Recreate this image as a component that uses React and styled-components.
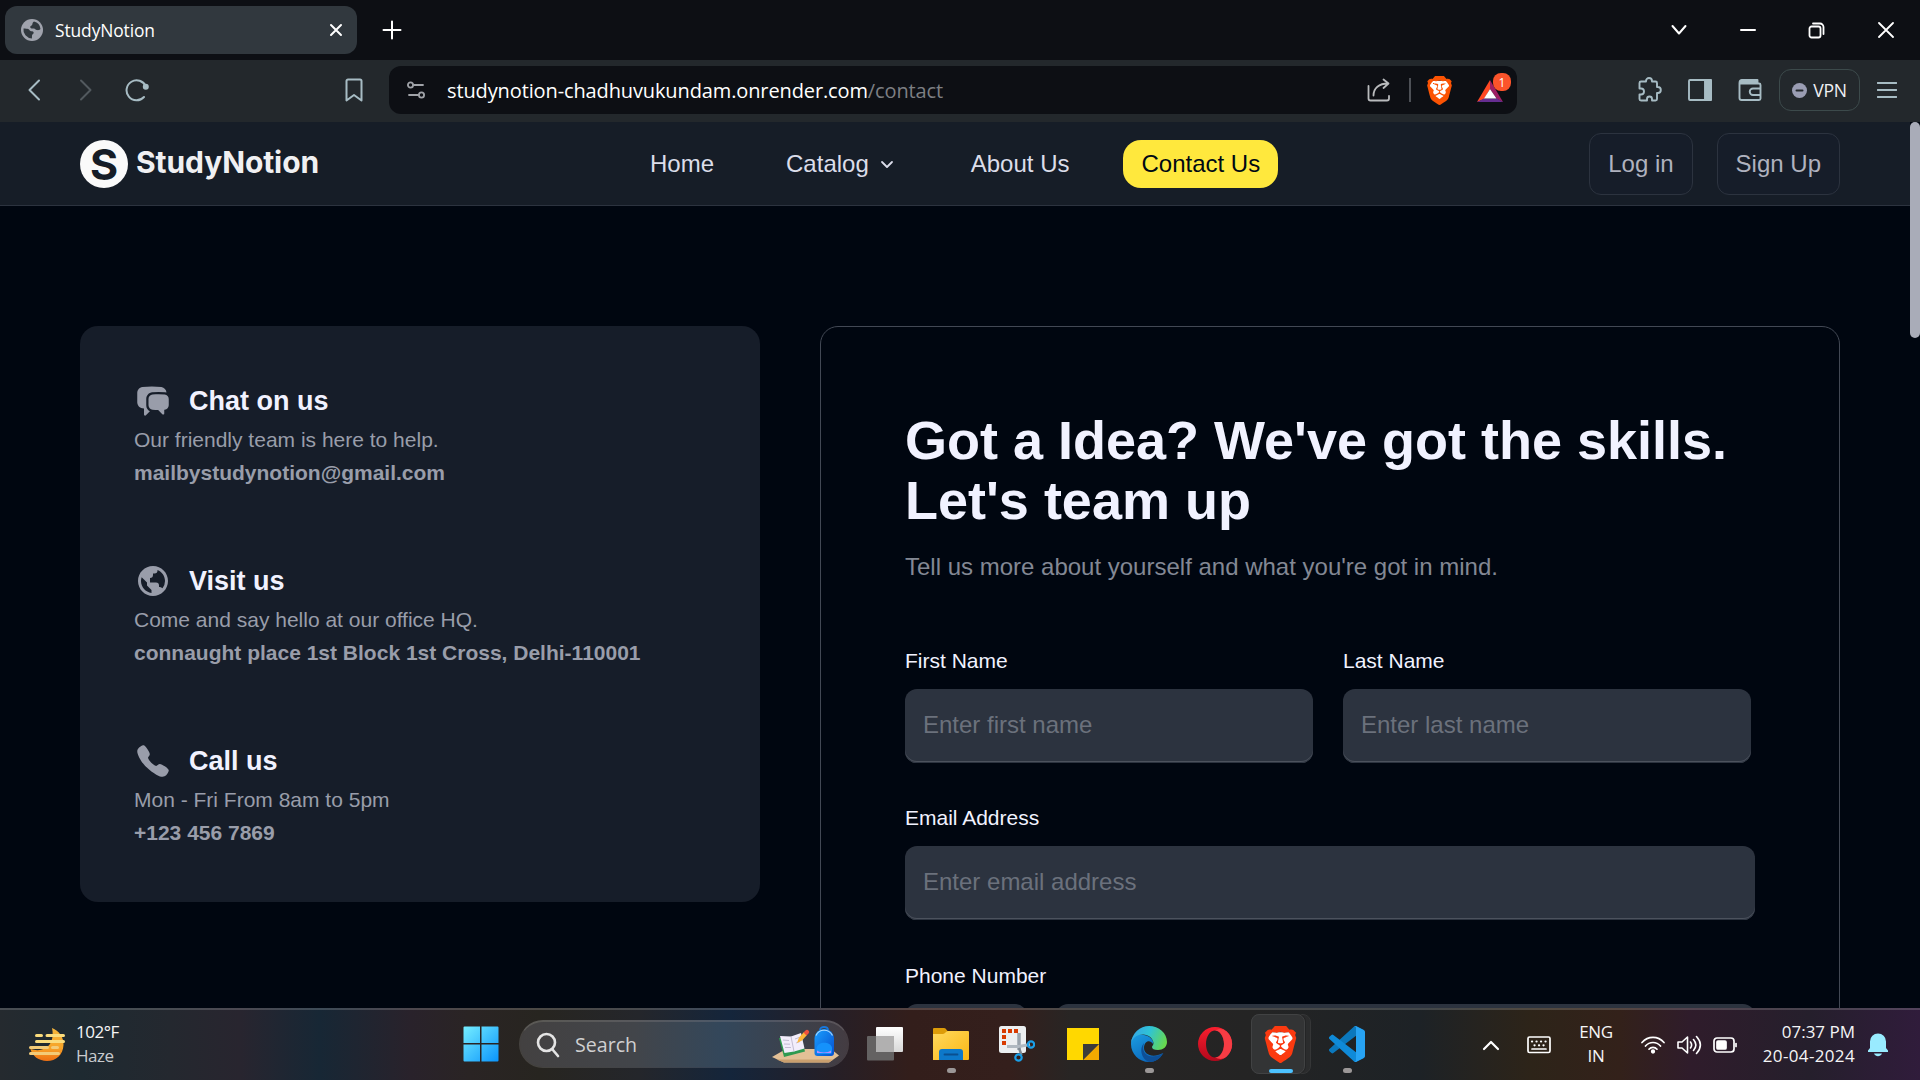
import React from "react";
import styled, { createGlobalStyle } from "styled-components";
import { HiChatBubbleLeftRight } from "react-icons/hi2";
import { BiWorld } from "react-icons/bi";
import { IoCall } from "react-icons/io5";
import { SiBrave } from "react-icons/si";

const Global = createGlobalStyle`
  * { box-sizing: border-box; }
  html, body { margin: 0; padding: 0; background: #000814; overflow: hidden; }
  svg { display: block; flex: none; }
`;

const SYSTEM = '"Open Sans", "Noto Sans", sans-serif';
const SANS = '"Liberation Sans", Arial, sans-serif';

const Screen = styled.div`
  width: 1920px;
  height: 1080px;
  display: flex;
  flex-direction: column;
  overflow: hidden;
  background: #000610;
  font-family: ${SANS};
`;

/* ---------- browser chrome ---------- */

const TabStrip = styled.div`
  height: 60px;
  flex: none;
  display: flex;
  align-items: center;
  background: #0d0f14;
  padding-left: 5px;
`;

const Tab = styled.div`
  width: 352px;
  height: 48px;
  border-radius: 12px;
  background: #31383e;
  display: flex;
  align-items: center;
  padding: 0 14px 0 16px;
  gap: 12px;
`;

const TabTitle = styled.span`
  flex: 1;
  font: 400 17.4px/24px ${SYSTEM};
  letter-spacing: -0.1px;
  color: #fff;
`;

const NewTab = styled.div`
  margin-left: 25px;
  flex: 1;
`;

const WindowControls = styled.div`
  display: flex;
  align-items: center;
  height: 60px;
`;

const ControlSlot = styled.div`
  width: 69px;
  display: flex;
  justify-content: center;
`;

const Toolbar = styled.div`
  height: 62px;
  flex: none;
  display: flex;
  align-items: center;
  background: #23282c;
  padding-bottom: 2px;
`;

const Slot = styled.div`
  width: ${(p) => p.$w}px;
  flex: none;
  display: flex;
  justify-content: center;
  align-items: center;
`;

const Spacer = styled.div`
  flex: 1;
`;

const AddressBar = styled.div`
  width: 1128px;
  height: 48px;
  flex: none;
  margin-left: 17px;
  border-radius: 12px;
  background: #0d0f14;
  display: flex;
  align-items: center;
  padding-left: 18px;
`;

const Url = styled.div`
  flex: 1;
  margin-left: 22px;
  padding-top: 1px;
  font: 400 20px/28px ${SYSTEM};
  letter-spacing: -0.12px;
  color: #fff;
  white-space: nowrap;
`;

const UrlPath = styled.span`
  color: #7d7f83;
`;

const Divider = styled.div`
  width: 2px;
  height: 24px;
  background: #4d5056;
`;

const VpnButton = styled.div`
  width: 81px;
  height: 42px;
  flex: none;
  border: 1.5px solid #3c4a4b;
  border-radius: 12px;
  display: flex;
  align-items: center;
  justify-content: center;
  gap: 6px;
  color: #f0f1f4;
  font: 400 17.6px/24px ${SYSTEM};
  letter-spacing: -0.3px;
`;

/* ---------- page ---------- */

const Viewport = styled.div`
  height: 886px;
  flex: none;
  display: flex;
  overflow: hidden;
`;

const Page = styled.div`
  width: 1910px;
  flex: none;
`;

const ScrollTrack = styled.div`
  width: 10px;
  background: #000610;
`;

const ScrollThumb = styled.div`
  height: 216px;
  border-radius: 5px;
  background: #a9acb8;
`;

const NavBar = styled.header`
  height: 84px;
  background: #161d27;
  border-bottom: 1px solid #2c333f;
  display: flex;
  align-items: center;
  padding: 0 70px 0 80px;
`;

const Logo = styled.div`
  display: flex;
  align-items: center;
  width: 552px;
  gap: 8px;
`;

const LogoMark = styled.div`
  width: 48px;
  height: 48px;
  border-radius: 50%;
  background: #fafafa;
  color: #161d27;
  font: 700 43px/49px Inter, sans-serif;
  text-align: center;
`;

const LogoWord = styled.div`
  padding-bottom: 3px;
  font: 700 30px/42px Inter, sans-serif;
  letter-spacing: -0.1px;
  color: #f0f0f2;
`;

const NavLinks = styled.nav`
  display: flex;
  gap: 36px;
  flex: 1;
`;

const NavLink = styled.a`
  height: 48px;
  padding: 0 18px;
  display: flex;
  align-items: center;
  gap: 6px;
  border-radius: 18px;
  font-size: 24px;
  color: ${(p) => (p.$active ? "#000814" : "#dbddea")};
  background: ${(p) => (p.$active ? "#ffe83d" : "transparent")};
  white-space: nowrap;
`;

const AuthButtons = styled.div`
  display: flex;
  gap: 24px;
`;

const AuthButton = styled.button`
  height: 62px;
  padding: 0 18px;
  border: 1px solid #2c333f;
  border-radius: 12px;
  background: #161d29;
  color: #afb2bf;
  font: 24px ${SANS};
`;

const Main = styled.main`
  display: flex;
  align-items: flex-start;
  gap: 60px;
  padding: 120px 70px 0 80px;
`;

const DetailsCard = styled.section`
  width: 680px;
  height: 576px;
  border-radius: 18px;
  background: #161d29;
  padding: 54px;
  display: flex;
  flex-direction: column;
  gap: 71px;
`;

const Detail = styled.div`
  font-size: 21px;
  line-height: 33px;
  color: #999daa;
`;

const DetailHead = styled.div`
  height: 42px;
  margin-bottom: 1px;
  padding-left: 1px;
  display: flex;
  align-items: center;
  gap: 18px;
`;

const DetailTitle = styled.h2`
  margin: 0;
  font-size: 27px;
  color: #f1f2ff;
`;

const DetailStrong = styled.div`
  font-weight: 700;
`;

const FormCard = styled.section`
  width: 1020px;
  height: 900px;
  border: 1px solid #424854;
  border-radius: 18px;
  padding: 83px 84px;
`;

const Heading = styled.h1`
  margin: 0;
  font-size: 54px;
  line-height: 60px;
  color: #f1f2ff;
  white-space: nowrap;
`;

const Lead = styled.p`
  margin: 19px 0 59px;
  font-size: 24px;
  line-height: 36px;
  color: #838894;
`;

const Fields = styled.form`
  display: flex;
  flex-direction: column;
  gap: 38.9px;
`;

const NameRow = styled.div`
  display: grid;
  grid-template-columns: 408px 408px;
  gap: 30px;
`;

const PhoneRow = styled.div`
  display: grid;
  grid-template-columns: 122px 1fr;
  gap: 29px;
`;

const Field = styled.label`
  display: flex;
  flex-direction: column;
  gap: 12px;
  font-size: 21px;
  line-height: 33px;
  color: #f1f2ff;
`;

const Input = styled.input`
  width: 100%;
  height: 73.5px;
  border: 0;
  border-radius: 12px;
  background: #2c333f;
  padding: 0 18px 2px;
  font: 24px ${SANS};
  color: #f1f2ff;
  box-shadow: inset 0 -1px 0 #2c333f, inset 0 -2px 0 #4c525d;
  &::placeholder {
    color: #6b717c;
    opacity: 1;
  }
`;

/* ---------- taskbar ---------- */

const Taskbar = styled.footer`
  height: 72px;
  flex: none;
  border-top: 2px solid rgba(255, 255, 255, 0.17);
  background: linear-gradient(
      90deg,
      #252a2f 0,
      #1e2a31 80px,
      #24282f 170px,
      #28252f 240px,
      #172735 320px,
      #29222b 410px,
      #2a2424 470px,
      #272520 540px,
      #24262b 640px,
      #14253b 730px,
      #251f27 830px,
      #331e1b 910px,
      #341f1c 1010px,
      #282524 1070px,
      #242424 1250px,
      #1d2226 1420px,
      #2d2419 1530px,
      #33211a 1620px,
      #2f1c2b 1690px,
      #251f2c 1810px,
      #301c3b 1920px
    )
    border-box;
  display: flex;
  align-items: center;
  color: #f5f5f6;
  font-family: ${SYSTEM};
`;

const Weather = styled.div`
  width: 448px;
  padding-left: 28px;
  display: flex;
  align-items: center;
  gap: 10px;
`;

const TwoLines = styled.div`
  display: flex;
  flex-direction: column;
  align-items: ${(p) => p.$align || "flex-start"};
  padding-bottom: 2px;
  font-size: 17px;
  line-height: 24px;
  letter-spacing: ${(p) => p.$track || "-0.3px"};
  white-space: nowrap;
`;

const DateText = styled.span`
  letter-spacing: 0.35px;
`;

const Muted = styled.span`
  color: #c9cbce;
`;

const SearchBox = styled.div`
  width: 330px;
  height: 48px;
  margin: 0 3px 2px 5px;
  border-radius: 25px;
  border: 1px solid rgba(255, 255, 255, 0.14);
  border-top: 2px solid rgba(255, 255, 255, 0.24);
  background: linear-gradient(90deg, #434141, #42454a 35%, #33475b 62%, #3e4049 88%, #443c42) padding-box;
  display: flex;
  align-items: center;
  padding: 0 8px 0 16px;
  gap: 15px;
`;

const SearchText = styled.span`
  flex: 1;
  font-size: 19.6px;
  color: #d0d0d1;
`;

const App66 = styled.div`
  width: 66px;
  height: 70px;
  flex: none;
  display: flex;
  flex-direction: column;
  align-items: center;
  padding-top: 16px;
`;

const Indicator = styled.div`
  width: ${(p) => (p.$active ? 24 : 9)}px;
  height: 5px;
  margin-top: 6px;
  border-radius: 3px;
  background: ${(p) => (p.$active ? "#4cc2ff" : "#9b9797")};
`;

const ActiveTile = styled.div`
  width: 60px;
  height: 60px;
  flex: none;
  margin: 0 3px 2px 3px;
  border-radius: 8px;
  background: #2b2c2d;
  border: 1px solid #353637;
`;

const ActiveFace = styled.div`
  width: 54px;
  height: 60px;
  margin: -1px;
  border-radius: 8px;
  border: 1px solid #414243;
  background: #333435;
  box-shadow: 1px 0 0 #242526;
  display: flex;
  flex-direction: column;
  align-items: center;
  padding: 11px 0 0 5px;
`;

const Tray = styled.div`
  flex: 1;
  display: flex;
  align-items: center;
  justify-content: flex-end;
  padding: 0 32px 1px 0;
`;

/* ---------- icons ---------- */

const Line = ({ w, h, vb, c = "#fff", s = 1.5, children, ...rest }) => (
  <svg
    width={w}
    height={h}
    viewBox={vb || `0 0 ${w} ${h}`}
    fill="none"
    stroke={c}
    strokeWidth={s}
    strokeLinecap="round"
    strokeLinejoin="round"
    {...rest}
  >
    {children}
  </svg>
);

const Favicon = () => (
  <svg width="22" height="22" viewBox="0 0 22 22">
    <circle cx="11" cy="11" r="11" fill="#a0a3ad" />
    <path
      d="M2.500 9.500c2 .2 3.500 0 4.700.5 1.400.6 1.300 2 2.800 2.200 1.500.1 2.700.2 2.700 1.600 0 1.500-1.600 1.300-1.700 2.600l-.1 3A8.600 8.600 0 0 1 2.500 9.500zM13 2.600a8.600 8.600 0 0 1 6.500 7.400c-1.200 1.400-2.500 1.200-3.700 1.100-1.400-.1-1.600-1.400-2.900-1.600-1.500-.2-3.400.2-3.700-1.300-.2-1.300 1.200-1.500 1.900-2.300.6-.8.2-2.600 1.900-3.300z"
      fill="#31383e"
    />
  </svg>
);

const BraveIcon = ({ size, color }) => (
  <svg width={size} height={size} viewBox="0 0 24 24">
    <path d="M4 4h16v7l-3 8H7L4 11z" fill="#fff" />
    <SiBrave size={24} color={color} />
  </svg>
);

const BatIcon = () => (
  <svg width="36" height="34" viewBox="0 0 36 34">
    <path d="M14 7 14 16 8 26 1 29z" fill="#ff4724" />
    <path d="M14 7 27 29 21 26 14 16z" fill="#9e1f63" />
    <path d="M1 29 8 25.500H21L27 29z" fill="#662d91" />
    <path d="M14 16 20.500 25.500H8z" fill="#fff" />
    <rect x="17" y="0" width="18" height="18" rx="8" fill="#fb542b" />
    <text x="26" y="13.500" fontSize="12" textAnchor="middle" fill="#fff" fontFamily="Open Sans, sans-serif">
      1
    </text>
  </svg>
);

const WeatherIcon = () => (
  <svg width="38" height="36" viewBox="0 0 38 36">
    <defs>
      <linearGradient id="moon" x1="0" y1="0" x2="0" y2="1">
        <stop offset="0" stopColor="#f4b63d" />
        <stop offset=".6" stopColor="#f7a428" />
        <stop offset="1" stopColor="#ee7014" />
      </linearGradient>
    </defs>
    <path d="M24 1c7 3 12 9 11.500 17C35 28 28 34 19 34 11 34 4 29 2.500 22c9 3 18 0 21-8 1.500-4 1.500-9 .5-13z" fill="url(#moon)" />
    <g stroke="#fbdc7c" strokeWidth="3" strokeLinecap="round">
      <path d="M8.500 8.500h5M19 8.500h16.500M8.500 14.500h27" />
      <path d="M2.500 20.500h17M24.500 20.500h5M2.500 26.500h28" stroke="#f3cb78" />
    </g>
  </svg>
);

const WindowsIcon = () => (
  <svg width="36" height="36" viewBox="0 0 36 36">
    <defs>
      <linearGradient id="win" x1="0" y1="0" x2="1" y2="1">
        <stop offset="0" stopColor="#75eeff" />
        <stop offset="1" stopColor="#0a94fc" />
      </linearGradient>
    </defs>
    <path
      d="M1.500.500H17V17H.500V1.500a1 1 0 0 1 1-1zM18.500.500H34.500a1 1 0 0 1 1 1V17H18.500zM.500 18.500H17V35.500H1.500a1 1 0 0 1-1-1zM18.500 18.500H35.500V34.500a1 1 0 0 1-1 1H18.500z"
      fill="url(#win)"
    />
  </svg>
);

const StudyArt = () => (
  <svg width="68" height="38" viewBox="0 0 68 38">
    <defs>
      <linearGradient id="bag" x1="0" y1="0" x2="1" y2="1">
        <stop offset="0" stopColor="#1aa0ff" />
        <stop offset="1" stopColor="#0650d0" />
      </linearGradient>
    </defs>
    <path d="M0 31 14 23H59L67 29.500 57 36.500H12z" fill="#e3c096" />
    <path d="M4.500 33.500h57L57 36.500H12z" fill="#c99f6e" />
    <path d="M7 12 12 31 33 25.500 29 9 19 12z" fill="#2f9a50" />
    <path d="M8 10 19 10.500 29 7 32.500 22.500 22 25.500 12.500 27z" fill="#f2edfb" />
    <path d="M19 10.500 22 25.500M11 14l6 .5M12 18l6 .2M13 21.500l6 0M23 13l4-1.500M24 17l4-1.500" stroke="#c3bdd2" strokeWidth="1" />
    <path d="M25 17 27 11.500 32 6 35 9 30 14.500z" fill="#fcb53a" />
    <path d="M31.500 6.500 33.500 4.500a2 2 0 0 1 3 3L34.500 9.500z" fill="#f0513c" />
    <path d="M48 4c0-4 8-4 8 0" stroke="#1677dd" strokeWidth="1.800" fill="none" />
    <path d="M42.500 13C42.500-.5 62 -.5 62 13V27a3 3 0 0 1-3 3H45.500a3 3 0 0 1-3-3z" fill="url(#bag)" />
    <path d="M44 9.500c3-7 13-7 16.500 0" stroke="#a7d8ff" strokeWidth="1.200" fill="none" />
    <path d="M44.500 22c1-7 14.500-7 15.500 0v4a2 2 0 0 1-2 2H46.500a2 2 0 0 1-2-2z" fill="#1592fb" />
    <path d="M45 24.500c3 2.500 11 2.500 14 0v2.500H45z" fill="#b78cff" />
  </svg>
);

const TaskViewIcon = () => (
  <svg width="36" height="36" viewBox="0 0 36 36">
    <defs>
      <linearGradient id="tv" x1="0" y1="0" x2="0" y2="1">
        <stop offset="0" stopColor="#fff" />
        <stop offset="1" stopColor="#d8d8d8" />
      </linearGradient>
    </defs>
    <rect x="0" y="10" width="27" height="24.500" rx="1" fill="#646262" />
    <rect x="9" y="1" width="27" height="25" rx="1" fill="url(#tv)" />
    <path d="M9 10h18v16H10a1 1 0 0 1-1-1z" fill="#b1b0b0" />
  </svg>
);

const ExplorerIcon = () => (
  <svg width="36" height="36" viewBox="0 0 36 36">
    <defs>
      <linearGradient id="fold" x1="0" y1="0" x2="1" y2="1">
        <stop offset="0" stopColor="#ffd95e" />
        <stop offset="1" stopColor="#fbb714" />
      </linearGradient>
    </defs>
    <path d="M0 3a1 1 0 0 1 1-1H11a2 2 0 0 1 1.500.600L15 5.500V12H0z" fill="#dd9c09" />
    <path d="M0 8H10c2 0 3-3 5-3H35a1 1 0 0 1 1 1V33a1 1 0 0 1-1 1H0z" fill="url(#fold)" />
    <path d="M6 34V26a3 3 0 0 1 3-3H27a3 3 0 0 1 3 3V34z" fill="#0d78c9" />
    <path d="M11.500 28.500h13" stroke="#0a4f8f" strokeWidth="1.800" strokeLinecap="round" />
  </svg>
);

const SnipIcon = () => (
  <svg width="36" height="36" viewBox="0 0 36 36">
    <rect x="0" y="0" width="27" height="27" rx="2.500" fill="#eceff1" />
    <path d="M3 3h4v4H3zM9 3h4v4H9zM15 3h4v4h-4zM3 9h4v4H3zM3 15h4v4H3z" fill="#d83b01" />
    <path d="M20 7V24" stroke="#9aa4ad" strokeWidth="3.500" />
    <path d="M8 20.500h12l11-2" stroke="#b0b9c1" strokeWidth="3.200" fill="none" />
    <path d="M20 22l2.500 7" stroke="#7e8891" strokeWidth="2.500" fill="none" />
    <circle cx="32" cy="18.500" r="3.200" fill="none" stroke="#1a9fe8" strokeWidth="2.200" />
    <circle cx="19.500" cy="31.500" r="3.200" fill="none" stroke="#1a9fe8" strokeWidth="2.200" />
  </svg>
);

const StickyIcon = () => (
  <svg width="36" height="36" viewBox="0 0 36 36">
    <path d="M2 2H34V18L18 34H2z" fill="#ffd800" />
    <path d="M34 18V34H18z" fill="#f2a900" />
    <path d="M18 18H34L18 34z" fill="#3b3b3b" />
  </svg>
);

const EdgeIcon = () => (
  <svg width="36" height="36" viewBox="0 0 36 36">
    <defs>
      <linearGradient id="eTop" x1="0" y1=".3" x2="1" y2=".6">
        <stop offset="0" stopColor="#35a5e6" />
        <stop offset=".45" stopColor="#2fc3d6" />
        <stop offset="1" stopColor="#68d94c" />
      </linearGradient>
      <linearGradient id="eBody" x1="0" y1="0" x2=".7" y2="1">
        <stop offset="0" stopColor="#1b9de2" />
        <stop offset="1" stopColor="#0a63b8" />
      </linearGradient>
    </defs>
    <path d="M0 18C0 9 7 7 13 9c6 1 10 5 9 9-3-5-9-3-9 4 0 6 8 11 19 5-3 6-8 9-14 9C8 36 0 28 0 18z" fill="url(#eBody)" />
    <path d="M13 17c-3 9 3 15 12 13 3-.5 5-1.500 7.500-3C29 33 24 36 18 36 10 33 8 22 13 17z" fill="#0e4f96" />
    <path d="M0 17C1 7 9 0 18 0 28 0 36 7 36 16c0 5-4 8-9 8-4 0-6-1-6-3 0-1 1.500-1.500 1.500-4C22 12 17 8 11 8.500 5.500 9 1.500 12 0 17z" fill="url(#eTop)" />
  </svg>
);

const OperaIcon = () => (
  <svg width="36" height="36" viewBox="0 0 36 36">
    <defs>
      <linearGradient id="op" x1="0" y1="0" x2="0" y2="1">
        <stop offset="0" stopColor="#fa1e2e" />
        <stop offset="1" stopColor="#b3081c" />
      </linearGradient>
    </defs>
    <path fillRule="evenodd" d="M18 1a17 17 0 1 0 0 34 17 17 0 0 0 0-34zM18 4.500c5 0 9 6 9 13.500s-4 13.500-9 13.500S9 25.500 9 18s4-13.500 9-13.500z" fill="url(#op)" />
    <path d="M18 4.500c4-2.500 8-2 11.500.800A17 17 0 0 1 29.500 30.700C26 33.500 22 33.500 18 31.500c5 0 9-6 9-13.500S23 4.500 18 4.500z" fill="#f63c44" />
  </svg>
);

const VsCodeIcon = () => (
  <svg width="36" height="36" viewBox="0 0 100 100">
    <path d="M96.500 10.800 75.900.900a6 6 0 0 0-7 1.200L1.300 63.700a4.200 4.200 0 0 0 0 6.200l5.500 5a4.200 4.200 0 0 0 5.300.200L93.300 13.400z" fill="#0b78bd" />
    <path d="M96.500 89.200 75.900 99.100a6 6 0 0 1-7-1.200L1.300 36.300a4.200 4.200 0 0 1 0-6.200l5.500-5a4.200 4.200 0 0 1 5.300-.200L93.300 86.600z" fill="#0f8ad8" />
    <path d="M75.900 99.100a6 6 0 0 1-7-1.200c2.200 2.200 6.100.600 6.100-2.600V4.700c0-3.200-3.900-4.800-6.100-2.600a6 6 0 0 1 7-1.200L96.500 10.800A6 6 0 0 1 100 16.400V83.600a6 6 0 0 1-3.500 5.600z" fill="#27a3f3" />
  </svg>
);

const details = [
  { Icon: HiChatBubbleLeftRight, title: "Chat on us", text: "Our friendly team is here to help.", strong: "mailbystudynotion@gmail.com" },
  { Icon: BiWorld, title: "Visit us", text: "Come and say hello at our office HQ.", strong: "connaught place 1st Block 1st Cross, Delhi-110001" },
  { Icon: IoCall, title: "Call us", text: "Mon - Fri From 8am to 5pm", strong: "+123 456 7869" },
];

const apps = [
  { Icon: TaskViewIcon },
  { Icon: ExplorerIcon, open: true },
  { Icon: SnipIcon },
  { Icon: StickyIcon },
  { Icon: EdgeIcon, open: true },
  { Icon: OperaIcon },
];

const Chrome = () => (
  <>
    <TabStrip>
      <Tab>
        <Favicon />
        <TabTitle>StudyNotion</TabTitle>
        <Line w={14} h={14} s={2}><path d="M2 2 12 12M12 2 2 12" /></Line>
      </Tab>
      <NewTab>
        <Line w={20} h={20} s={2}><path d="M10 1.500v17M1.500 10h17" /></Line>
      </NewTab>
      <WindowControls>
        <ControlSlot><Line w={16} h={12} s={2}><path d="M1.500 2 8 9.500 14.500 2" /></Line></ControlSlot>
        <ControlSlot><Line w={16} h={4} s={2}><path d="M1 2h14" /></Line></ControlSlot>
        <ControlSlot>
          <Line w={17} h={17} s={1.8}>
            <rect x="1.500" y="4.500" width="11" height="11" rx="2" />
            <path d="M5 1.500h7a3.500 3.500 0 0 1 3.500 3.500v7" />
          </Line>
        </ControlSlot>
        <ControlSlot><Line w={16} h={16} s={1.8}><path d="M1 1 15 15M15 1 1 15" /></Line></ControlSlot>
      </WindowControls>
    </TabStrip>
    <Toolbar>
      <Slot $w={67}><Line w={14} h={22} c="#a7bcc4" s={2}><path d="M12 1.500 2.500 11 12 20.500" /></Line></Slot>
      <Slot $w={37}><Line w={14} h={22} c="#52595e" s={2}><path d="M2 1.500 11.500 11 2 20.500" /></Line></Slot>
      <Slot $w={66}>
        <Line w={24} h={24} c="#a7bcc4" s={2}>
          <path d="M20.800 8.500A10 10 0 1 0 19 19" />
          <circle cx="20.800" cy="8.800" r="2" fill="#a7bcc4" />
        </Line>
      </Slot>
      <Spacer />
      <Slot $w={37}><Line w={18} h={24} c="#a7bcc4" s={2}><path d="M1.500 3a1.500 1.500 0 0 1 1.500-1.500H15A1.500 1.500 0 0 1 16.500 3V22.500L9 17 1.500 22.500z" /></Line></Slot>
      <AddressBar>
        <Line w={18} h={18} c="#a0a3a8" s={1.8}>
          <circle cx="3.500" cy="4" r="2.600" /><path d="M7 4h9" />
          <circle cx="14.500" cy="14" r="2.600" /><path d="M2 14h9" />
        </Line>
        <Url>studynotion-chadhuvukundam.onrender.com<UrlPath>/contact</UrlPath></Url>
        <Slot $w={24}>
          <Line w={24} h={24} c="#b9bbbd" s={1.8}>
            <path d="M1.500 8v12.500a2 2 0 0 0 2 2H20a2 2 0 0 0 2-2V18M6.500 17.500C6.500 10 12 5.500 21 5.500M16.500 1.500 21.500 5.500 16.500 10" />
          </Line>
        </Slot>
        <Slot $w={38}><Divider /></Slot>
        <Slot $w={20}><BraveIcon size={29} color="#fb5303" /></Slot>
        <Slot $w={27} />
        <BatIcon />
        <Slot $w={5} />
      </AddressBar>
      <Slot $w={107} />
      <Slot $w={51}>
        <Line w={26} h={26} c="#a7bcc4" s={1.9}>
          <path d="M4 4.500H9V4a3 3 0 0 1 6 0v.500H18.500A1.500 1.500 0 0 1 20 6V10h.8a3 3 0 0 1 0 6H20v6a1.500 1.500 0 0 1-1.500 1.500H15V22a2.500 2.500 0 0 0-5 0v1.500H4A1.500 1.500 0 0 1 2.500 22V17.500H4a2.700 2.700 0 0 0 0-6H2.500V6A1.500 1.500 0 0 1 4 4.500z" />
        </Line>
      </Slot>
      <Slot $w={49}>
        <Line w={24} h={22} c="#a7bcc4" s={1.9}><rect x="1" y="1" width="22" height="20" rx="1" /><path d="M17 1h6v20h-6z" fill="#a7bcc4" /></Line>
      </Slot>
      <Slot $w={52}>
        <Line w={24} h={22} c="#a7bcc4" s={1.9}>
          <path d="M1.500 4.500V19a2 2 0 0 0 2 2H21a1.500 1.500 0 0 0 1.500-1.500V6A1.500 1.500 0 0 0 21 4.500H1.500zM1.500 4.500c0-2 .5-3.500 2-3.500H19.500v3.500M3 2.800h16M22.500 9.500H15a3 3 0 0 0 0 6.500h7.500" />
        </Line>
      </Slot>
      <Slot $w={3} />
      <VpnButton>
        <Line w={15} h={15} c="#23282c" s={2}><circle cx="7.500" cy="7.500" r="7.500" fill="#9a9db3" stroke="none" /><path d="M4.500 7.500h6" /></Line>
        VPN
      </VpnButton>
      <Slot $w={53}><Line w={20} h={18} c="#a7bcc4" s={1.8}><path d="M.500 2h19M.500 9h19M.500 16h19" /></Line></Slot>
      <Slot $w={7} />
    </Toolbar>
  </>
);

const ContactPage = () => (
  <Viewport>
    <Page>
      <NavBar>
        <Logo><LogoMark>S</LogoMark><LogoWord>StudyNotion</LogoWord></Logo>
        <NavLinks>
          <NavLink>Home</NavLink>
          <NavLink>
            Catalog
            <Line w={24} h={24} c="#dbddea" s={1.8}><path d="M7 10 12 15 17 10" /></Line>
          </NavLink>
          <NavLink>About Us</NavLink>
          <NavLink $active>Contact Us</NavLink>
        </NavLinks>
        <AuthButtons>
          <AuthButton>Log in</AuthButton>
          <AuthButton>Sign Up</AuthButton>
        </AuthButtons>
      </NavBar>
      <Main>
        <DetailsCard>
          {details.map(({ Icon, title, text, strong }) => (
            <Detail key={title}>
              <DetailHead><Icon size={36} /><DetailTitle>{title}</DetailTitle></DetailHead>
              <div>{text}</div>
              <DetailStrong>{strong}</DetailStrong>
            </Detail>
          ))}
        </DetailsCard>
        <FormCard>
          <Heading>Got a Idea? We've got the skills.<br />Let's team up</Heading>
          <Lead>Tell us more about yourself and what you're got in mind.</Lead>
          <Fields>
            <NameRow>
              <Field>First Name<Input placeholder="Enter first name" /></Field>
              <Field>Last Name<Input placeholder="Enter last name" /></Field>
            </NameRow>
            <Field>Email Address<Input placeholder="Enter email address" /></Field>
            <Field as="div">
              Phone Number
              <PhoneRow><Input /><Input /></PhoneRow>
            </Field>
          </Fields>
        </FormCard>
      </Main>
    </Page>
    <ScrollTrack><ScrollThumb /></ScrollTrack>
  </Viewport>
);

const Dock = () => (
  <Taskbar>
    <Weather>
      <WeatherIcon />
      <TwoLines $track="-0.5px"><span>102°F</span><Muted>Haze</Muted></TwoLines>
    </Weather>
    <App66><WindowsIcon /></App66>
    <SearchBox>
      <Line w={24} h={26} c="#e4e4e4" s={2.6}><circle cx="10.500" cy="10.500" r="8.500" /><path d="M16.500 17.500 22 24" /></Line>
      <SearchText>Search</SearchText>
      <StudyArt />
    </SearchBox>
    {apps.map(({ Icon, open }, i) => (
      <App66 key={i}><Icon />{open && <Indicator />}</App66>
    ))}
    <ActiveTile>
      <ActiveFace>
        <BraveIcon size={37} color="#fb3a10" />
        <Indicator $active />
      </ActiveFace>
    </ActiveTile>
    <App66><VsCodeIcon /><Indicator /></App66>
    <Tray>
      <Slot $w={72}><Line w={18} h={12} s={2.2}><path d="M2 10 9 3 16 10" /></Line></Slot>
      <Slot $w={24}>
        <Line w={24} h={18} s={1.7}>
          <rect x="1" y="1" width="22" height="15.500" rx="1.500" />
          <path d="M5 13h14" />
          <path d="M5 5.500h.1M9.500 5.500h.1M14 5.500h.1M18.500 5.500h.1M7.500 9.300h.1M12 9.300h.1M16.500 9.300h.1" strokeWidth={2.2} />
        </Line>
      </Slot>
      <Slot $w={90}><TwoLines $align="center"><span>ENG</span><span>IN</span></TwoLines></Slot>
      <Slot $w={24}>
        <Line w={24} h={18} s={1.7}>
          <path d="M1 6.500C7-.300 17-.300 23 6.500M4.500 10c4-4.700 11-4.700 15 0M8 13.200c2-2.500 6-2.500 8 0" />
          <circle cx="12" cy="15.500" r="1.300" fill="#fff" />
        </Line>
      </Slot>
      <Slot $w={48}>
        <Line w={25} h={20} s={1.6}>
          <path d="M1 7h4l5.500-5v16L5 13H1zM13.500 7c1.500 2 1.500 4 0 6M16.500 4.500c3 3.500 3 7.500 0 11M19.500 1.500c5 5.500 5 11.500 0 17" />
        </Line>
      </Slot>
      <Slot $w={24}>
        <Line w={24} h={16} s={1.7}>
          <rect x="1" y="1" width="20" height="14" rx="3" />
          <rect x="4" y="4" width="9" height="8" rx="1" fill="#fff" />
          <path d="M23 6.500v3" />
        </Line>
      </Slot>
      <Slot $w={118}>
        <Spacer />
        <TwoLines $align="flex-end" $track="0px"><span>07:37 PM</span><DateText>20-04-2024</DateText></TwoLines>
      </Slot>
      <Slot $w={33}>
        <Spacer />
        <svg width="20" height="24" viewBox="0 0 20 24">
          <path d="M0 17.500 2 15V8.500a8 8 0 0 1 16 0V15l2 2.500V19H0zM6 20.500h8c-1.500 3.500-6.500 3.500-8 0z" fill="#99ebff" />
        </svg>
      </Slot>
    </Tray>
  </Taskbar>
);

export default function App() {
  return (
    <Screen>
      <Global />
      <Chrome />
      <ContactPage />
      <Dock />
    </Screen>
  );
}
